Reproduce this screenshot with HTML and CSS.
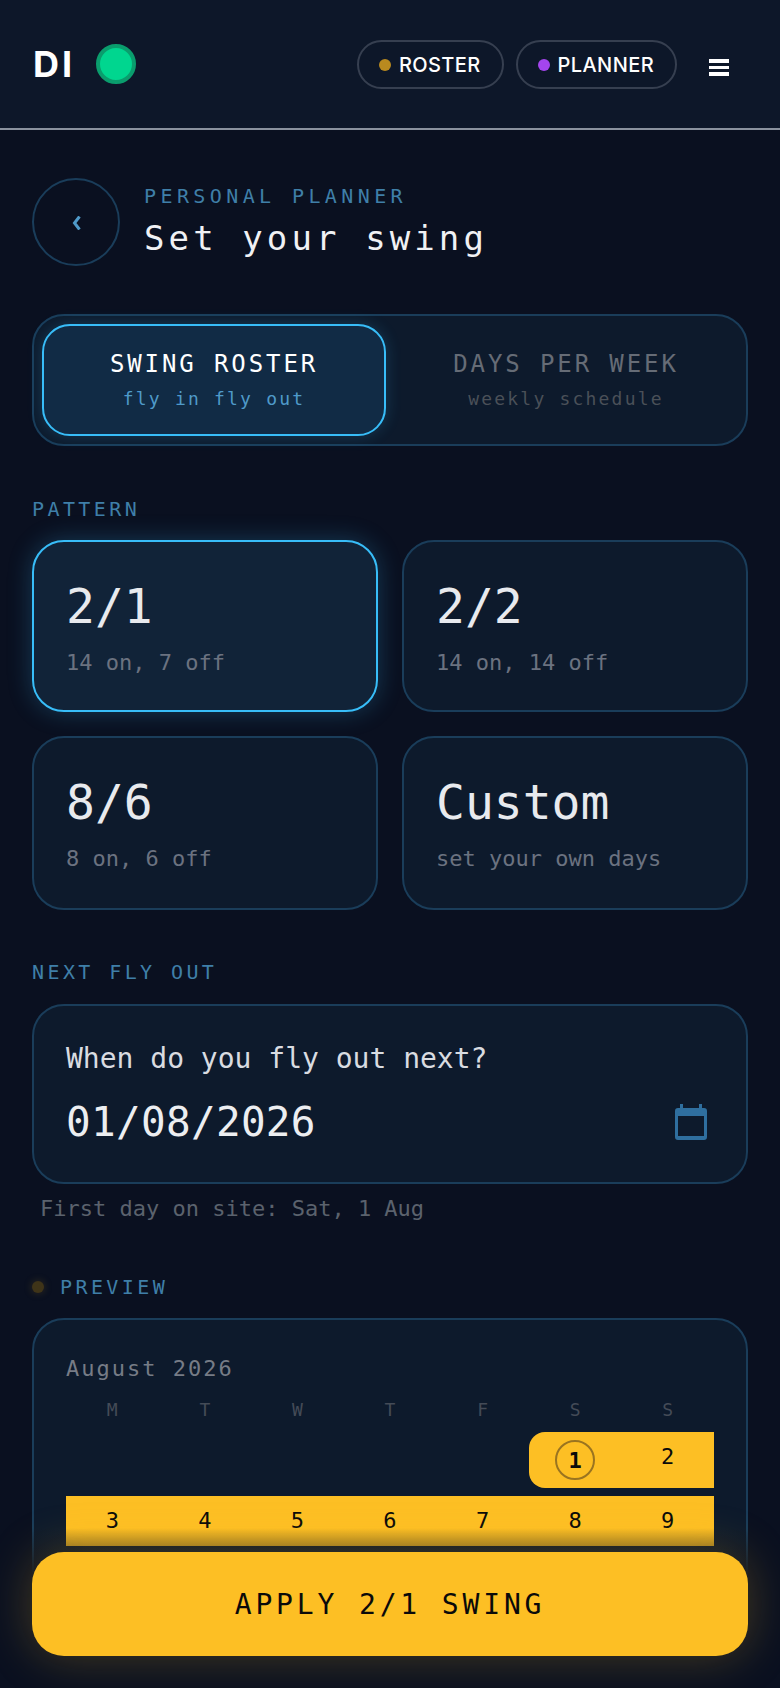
FILE: index.html
```html
<!DOCTYPE html>
<html lang="en">
<head>
    <meta charset="UTF-8">
    <meta name="viewport" content="width=device-width, initial-scale=1.0">
    <title>Set your swing</title>
    <link rel="stylesheet" href="styles.css">
</head>
<body>
    <header class="topbar">
        <div class="brand">
            <span class="brand-name">DI</span>
            <span class="brand-dot"></span>
        </div>
        <nav class="topnav">
            <a class="pill"><span class="pill-dot pill-dot-amber"></span>ROSTER</a>
            <a class="pill"><span class="pill-dot pill-dot-purple"></span>PLANNER</a>
            <span class="burger"><i></i><i></i><i></i></span>
        </nav>
    </header>

    <main class="page">
        <div class="heading">
            <button class="back">
                <svg width="9" height="14" viewBox="0 0 9 14">
                    <path d="M7.5 0.5 L2.5 7 L7.5 13.5" fill="none" stroke="#4f9ac9" stroke-width="3"/>
                </svg>
            </button>
            <div class="heading-text">
                <div class="eyebrow">PERSONAL PLANNER</div>
                <h1>Set your swing</h1>
            </div>
        </div>

        <div class="tabs">
            <div class="tab tab-active">
                <div class="tab-title">SWING ROSTER</div>
                <div class="tab-sub">fly in fly out</div>
            </div>
            <div class="tab">
                <div class="tab-title">DAYS PER WEEK</div>
                <div class="tab-sub">weekly schedule</div>
            </div>
        </div>

        <div class="label label-pattern">PATTERN</div>
        <div class="patterns">
            <div class="card pattern pattern-active">
                <div class="pattern-name">2/1</div>
                <div class="pattern-sub">14 on, 7 off</div>
            </div>
            <div class="card pattern">
                <div class="pattern-name">2/2</div>
                <div class="pattern-sub">14 on, 14 off</div>
            </div>
            <div class="card pattern">
                <div class="pattern-name">8/6</div>
                <div class="pattern-sub">8 on, 6 off</div>
            </div>
            <div class="card pattern">
                <div class="pattern-name">Custom</div>
                <div class="pattern-sub">set your own days</div>
            </div>
        </div>

        <div class="label label-next">NEXT FLY OUT</div>
        <div class="card flyout">
            <div class="flyout-q">When do you fly out next?</div>
            <div class="flyout-row">
                <span class="flyout-date">01/08/2026</span>
                <svg class="cal" width="32" height="36" viewBox="0 0 32 36">
                    <path d="M5 0h3v5H5zM24 0h3v5h-3z" fill="#2f6f9f"/>
                    <path d="M3 4h26a3 3 0 0 1 3 3v26a3 3 0 0 1-3 3H3a3 3 0 0 1-3-3V7a3 3 0 0 1 3-3zM3 12v20h26V12z" fill="#2f6f9f" fill-rule="evenodd"/>
                </svg>
            </div>
        </div>
        <div class="hint">First day on site: Sat, 1 Aug</div>

        <div class="label label-preview"><span class="preview-dot"></span>PREVIEW</div>
        <div class="card preview">
            <div class="month">August 2026</div>
            <div class="week week-head">
                <span>M</span><span>T</span><span>W</span><span>T</span><span>F</span><span>S</span><span>S</span>
            </div>
            <div class="week week-days week-first">
                <span></span><span></span><span></span><span></span><span></span>
                <span class="on on-start"><b class="first">1</b></span>
                <span class="on">2</span>
            </div>
            <div class="week week-days">
                <span class="on">3</span><span class="on">4</span><span class="on">5</span><span class="on">6</span><span class="on">7</span><span class="on">8</span><span class="on">9</span>
            </div>
        </div>
    </main>

    <footer class="footer">
        <button class="apply">APPLY 2/1 SWING</button>
    </footer>
</body>
</html>
```

FILE: styles.css
```css
* {
    box-sizing: border-box;
}

html {
    overflow: hidden;
}

body {
    margin: 0;
    height: 1688px;
    overflow: hidden;
    position: relative;
    background: #0a1020;
    color: #e8eaee;
    font-family: "DejaVu Sans Mono", monospace;
}

.topbar {
    height: 130px;
    padding: 0 32px;
    display: flex;
    align-items: center;
    justify-content: space-between;
    background: #0d1729;
    border-bottom: 2px solid #8a929e;
}

.brand {
    padding-left: 1px;
    display: flex;
    align-items: center;
    gap: 21px;
}

.brand-name {
    font-family: Inter, sans-serif;
    font-weight: 700;
    font-size: 36px;
    letter-spacing: 3px;
    color: #fff;
}

.brand-dot {
    width: 40px;
    height: 40px;
    border-radius: 50%;
    background: #00d68f;
    border: 4px solid #0a9d6d;
}

.topnav {
    display: flex;
    align-items: center;
    gap: 12px;
}

.pill {
    height: 49px;
    margin-top: 1px;
    padding: 0 21px 0 20px;
    display: flex;
    align-items: center;
    gap: 8px;
    border: 2px solid #363f50;
    border-radius: 25px;
    font-family: Inter, sans-serif;
    font-weight: 500;
    font-size: 20px;
    letter-spacing: 0.4px;
    color: #fff;
}

.pill-dot {
    width: 12px;
    height: 12px;
    border-radius: 50%;
}

.pill-dot-amber {
    background: #b98a1f;
}

.pill-dot-purple {
    background: #a445ee;
}

.burger {
    width: 20px;
    margin: 7px 19px 0 20px;
    display: flex;
    flex-direction: column;
    gap: 3px;
}

.burger i {
    height: 3.7px;
    background: #fff;
}

.page {
    padding: 48px 32px 0;
}

.heading {
    display: flex;
    align-items: center;
    gap: 24px;
}

.heading-text {
    padding-bottom: 3px;
}

.back {
    width: 88px;
    height: 88px;
    border-radius: 50%;
    border: 2px solid #1a3d5a;
    background: transparent;
    padding: 4px 0 0;
}

.eyebrow {
    font-size: 20px;
    letter-spacing: 4.4px;
    color: #3f7fa8;
    line-height: 24px;
}

h1 {
    margin: 10px 0 0;
    font-size: 34px;
    font-weight: 400;
    letter-spacing: 4.1px;
    line-height: 40px;
    color: #f0f1f4;
}

.tabs {
    margin-top: 48px;
    height: 132px;
    padding: 8px;
    display: grid;
    grid-template-columns: 1fr 1fr;
    gap: 8px;
    border: 2px solid #1a3d5a;
    border-radius: 32px;
    background: #0d1a2c;
}

.tab {
    border-radius: 28px;
    display: flex;
    flex-direction: column;
    align-items: center;
    justify-content: center;
    gap: 10px;
    color: #666c76;
}

.tab-active {
    background: #112b45;
    border: 2px solid #38bdf8;
    box-shadow: 0 0 16px rgba(56, 189, 248, 0.2);
    color: #fff;
}

.tab-title {
    font-size: 24px;
    letter-spacing: 2.9px;
    line-height: 28px;
}

.tab-sub {
    font-size: 18px;
    letter-spacing: 2.2px;
    line-height: 22px;
    color: #4a5058;
}

.tab-active .tab-sub {
    color: #4f9ac9;
}

.label {
    font-size: 20px;
    letter-spacing: 3.4px;
    line-height: 24px;
    color: #3f7fa8;
}

.label-pattern {
    margin-top: 51px;
}

.patterns {
    margin-top: 19px;
    display: grid;
    grid-template-columns: 1fr 1fr;
    grid-template-rows: 172px 174px;
    gap: 24px;
}

.card {
    border: 2px solid #1a3d5a;
    border-radius: 32px;
    background: #0d1a2c;
}

.pattern {
    padding: 33px 32px 0;
}

.pattern-active {
    border-color: #38bdf8;
    background: #112338;
    box-shadow: 0 0 24px rgba(56, 189, 248, 0.25);
}

.pattern-name {
    font-size: 48px;
    line-height: 62px;
    color: #e8eaee;
}

.pattern-sub {
    margin-top: 12px;
    font-size: 22px;
    line-height: 28px;
    color: #6b7280;
}

.label-next {
    margin-top: 50px;
}

.flyout {
    margin-top: 20px;
    height: 180px;
    padding: 35px 39px 0 32px;
}

.flyout-q {
    font-size: 28px;
    line-height: 36px;
    color: #d9dce1;
}

.flyout-row {
    margin-top: 17px;
    display: flex;
    align-items: center;
    justify-content: space-between;
}

.flyout-date {
    font-size: 41px;
    letter-spacing: 0.3px;
    line-height: 56px;
    color: #eceef1;
}

.hint {
    margin: 11px 0 0 8px;
    font-size: 22px;
    line-height: 28px;
    color: #5b626d;
}

.label-preview {
    margin-top: 52px;
    display: flex;
    align-items: center;
    gap: 16px;
}

.preview-dot {
    width: 12px;
    height: 12px;
    border-radius: 50%;
    background: #3f3418;
    box-shadow: 0 0 8px rgba(185, 138, 31, 0.25);
}

.preview {
    margin-top: 19px;
    height: 320px;
    padding: 35px 32px 0;
}

.month {
    font-size: 22px;
    letter-spacing: 2px;
    line-height: 28px;
    color: #767c86;
}

.week {
    display: grid;
    grid-template-columns: repeat(7, 1fr);
    text-align: center;
}

.week-head {
    margin-top: 15px;
    font-size: 18px;
    line-height: 24px;
    color: #444b57;
}

.week-days {
    margin-top: 8px;
    height: 50px;
    font-size: 22px;
    line-height: 50px;
    color: #0a0a0a;
}

.week-first {
    margin-top: 10px;
    height: 56px;
}

.on {
    background: #fdbf24;
}

.on-start {
    border-radius: 16px 0 0 16px;
}

.first {
    display: block;
    width: 40px;
    height: 40px;
    margin: 8px auto 0;
    border: 2px solid #9a7420;
    border-radius: 50%;
    font-weight: 700;
    line-height: 37px;
}

.footer {
    position: absolute;
    left: 0;
    right: 0;
    bottom: 0;
    padding: 24px 32px 32px;
    background: linear-gradient(rgba(10, 16, 32, 0), #0a1020 30%);
}

.apply {
    display: block;
    width: 100%;
    height: 104px;
    border: none;
    border-radius: 32px;
    background: #fdbf24;
    color: #0a0a0a;
    font-family: "DejaVu Sans Mono", monospace;
    font-size: 28px;
    letter-spacing: 3.85px;
    box-shadow: 0 0 48px rgba(253, 191, 36, 0.25);
}
```
